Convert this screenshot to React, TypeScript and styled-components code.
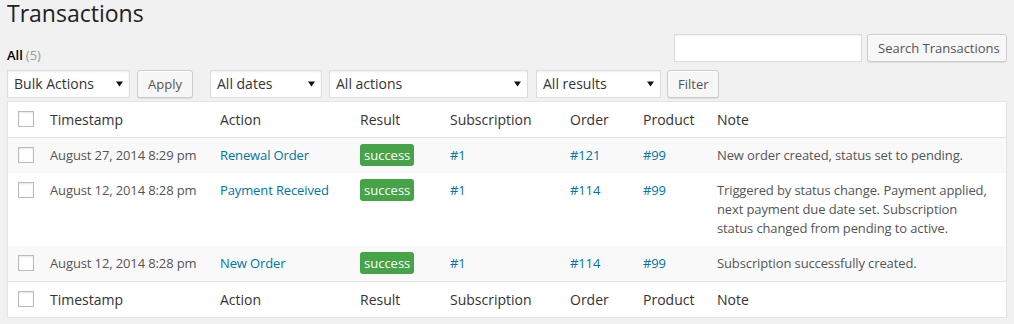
import React from "react";
import styled, { createGlobalStyle } from "styled-components";

const Global = createGlobalStyle`
  html, body { margin: 0; padding: 0; }
  body {
    background: #f1f1f1;
    font-family: "Open Sans", "Liberation Sans", sans-serif;
    font-size: 13px;
    color: #444;
  }
  * { box-sizing: border-box; }
`;

const Page = styled.div`
  padding: 0 7px;
`;

const Title = styled.h1`
  margin: 0;
  font-size: 23px;
  font-weight: 400;
  line-height: 27px;
  color: #222;
  height: 34px;
`;

const TopRow = styled.div`
  display: flex;
  justify-content: space-between;
  align-items: flex-start;
  height: 28px;
`;

const Views = styled.div`
  margin-top: 12px;
  font-size: 13px;
  line-height: 18px;
  color: #999;
`;

const Current = styled.a`
  color: #000;
  font-weight: 600;
  text-decoration: none;
  margin-right: 3px;
`;

const SearchBox = styled.form`
  display: flex;
  gap: 5px;
  margin: 0;
`;

const SearchInput = styled.input`
  width: 188px;
  height: 28px;
  border: 1px solid #ddd;
  background: #fff;
  box-shadow: inset 0 1px 2px rgba(0, 0, 0, 0.07);
  font: inherit;
  padding: 3px 5px;
  margin: 0;
  outline: none;
`;

const Button = styled.button<{ $w?: number }>`
  height: 28px;
  ${(p) => (p.$w ? `width: ${p.$w}px;` : "")}
  padding: 0 10px 1px;
  border: 1px solid #ccc;
  border-radius: 3px;
  background: #f7f7f7;
  box-shadow: inset 0 1px 0 #fff, 0 1px 0 rgba(0, 0, 0, 0.08);
  color: #555;
  font-family: "Open Sans", "Liberation Sans", sans-serif;
  font-size: 13px;
  line-height: 26px;
  white-space: nowrap;
  margin: 0;
  cursor: pointer;
`;

const Toolbar = styled.div`
  display: flex;
  align-items: center;
  margin-top: 8px;
  height: 28px;
`;

const Select = styled.div<{ $w: number; $ml?: number }>`
  display: flex;
  align-items: center;
  justify-content: space-between;
  width: ${(p) => p.$w}px;
  margin-left: ${(p) => p.$ml ?? 0}px;
  height: 28px;
  padding: 0 6px 0 6px;
  border: 1px solid #ddd;
  background: #fff;
  box-shadow: inset 0 1px 2px rgba(0, 0, 0, 0.07);
  font-size: 14px;
  color: #333;
  line-height: 26px;
`;

const Spacer = styled.span<{ $w: number }>`
  display: block;
  width: ${(p) => p.$w}px;
  flex: none;
`;

const Arrow = () => (
  <svg width="7" height="6" viewBox="0 0 7 6" style={{ flex: "none" }}>
    <path d="M0 0.5 H7 L3.5 5.5 Z" fill="#111" />
  </svg>
);

const Table = styled.table`
  margin-top: 3px;
  width: 100%;
  table-layout: fixed;
  border-collapse: separate;
  border-spacing: 0;
  border: 1px solid #e5e5e5;
  background: #fff;
  box-shadow: 0 1px 1px rgba(0, 0, 0, 0.04);
`;

const Th = styled.th<{ $foot?: boolean }>`
  text-align: left;
  font-weight: 400;
  font-size: 14px;
  line-height: 19px;
  color: #333;
  padding: 8px 10px;
  ${(p) =>
    p.$foot
      ? "border-top: 1px solid #e1e1e1;"
      : "border-bottom: 1px solid #e1e1e1;"}
`;

const CheckTh = styled(Th)`
  padding: 9px 0 0 10px;
  vertical-align: top;
`;

const Row = styled.tr<{ $alt?: boolean }>`
  background: ${(p) => (p.$alt ? "#f9f9f9" : "#fff")};
`;

const Td = styled.td`
  font-size: 13px;
  line-height: 19px;
  letter-spacing: -0.12px;
  color: #555;
  padding: 8px 10px;
  vertical-align: top;
`;

const CheckTd = styled(Td)`
  padding: 9px 0 0 10px;
`;

const Check = styled.input.attrs({ type: "checkbox" })`
  appearance: none;
  display: block;
  width: 16px;
  height: 16px;
  margin: 0;
  border: 1px solid #bbb;
  background: #fff;
  box-shadow: inset 0 1px 2px rgba(0, 0, 0, 0.1);
`;

const Link = styled.a`
  color: #0074a2;
  text-decoration: none;
`;

const Badge = styled.span`
  background: #46a348;
  color: #fff;
  border-radius: 3px;
  padding: 2px 4px;
  letter-spacing: 0;
`;

const widths = [32, 170, 140, 90, 120, 73, 74, 299];
const heads = ["Timestamp", "Action", "Result", "Subscription", "Order", "Product", "Note"];

const rows = [
  {
    ts: "August 27, 2014 8:29 pm",
    action: "Renewal Order",
    sub: "#1",
    order: "#121",
    product: "#99",
    note: "New order created, status set to pending.",
  },
  {
    ts: "August 12, 2014 8:28 pm",
    action: "Payment Received",
    sub: "#1",
    order: "#114",
    product: "#99",
    note: "Triggered by status change. Payment applied, next payment due date set. Subscription status changed from pending to active.",
  },
  {
    ts: "August 12, 2014 8:28 pm",
    action: "New Order",
    sub: "#1",
    order: "#114",
    product: "#99",
    note: "Subscription successfully created.",
  },
];

const HeadRow = ({ foot }: { foot?: boolean }) => (
  <tr>
    <CheckTh $foot={foot}>
      <Check />
    </CheckTh>
    {heads.map((h) => (
      <Th key={h} $foot={foot}>
        {h}
      </Th>
    ))}
  </tr>
);

export default function App() {
  return (
    <>
      <Global />
      <Page>
        <Title>Transactions</Title>
        <TopRow>
          <Views>
            <Current href="#">All</Current>(5)
          </Views>
          <SearchBox onSubmit={(e) => e.preventDefault()}>
            <SearchInput type="search" />
            <Button $w={140} type="submit">Search Transactions</Button>
          </SearchBox>
        </TopRow>
        <Toolbar>
          <Select $w={123}>
            <span>Bulk Actions</span>
            <Arrow />
          </Select>
          <Spacer $w={7} />
          <Button $w={56}>Apply</Button>
          <Select $w={112} $ml={17}>
            <span>All dates</span>
            <Arrow />
          </Select>
          <Select $w={199} $ml={7}>
            <span>All actions</span>
            <Arrow />
          </Select>
          <Select $w={125} $ml={8}>
            <span>All results</span>
            <Arrow />
          </Select>
          <Spacer $w={6} />
          <Button $w={52}>Filter</Button>
        </Toolbar>
        <Table>
          <colgroup>
            {widths.map((w, i) => (
              <col key={i} style={{ width: w }} />
            ))}
          </colgroup>
          <thead>
            <HeadRow />
          </thead>
          <tbody>
            {rows.map((r, i) => (
              <Row key={i} $alt={i % 2 === 0}>
                <CheckTd>
                  <Check />
                </CheckTd>
                <Td>{r.ts}</Td>
                <Td>
                  <Link href="#">{r.action}</Link>
                </Td>
                <Td>
                  <Badge>success</Badge>
                </Td>
                <Td>
                  <Link href="#">{r.sub}</Link>
                </Td>
                <Td>
                  <Link href="#">{r.order}</Link>
                </Td>
                <Td>
                  <Link href="#">{r.product}</Link>
                </Td>
                <Td>{r.note}</Td>
              </Row>
            ))}
          </tbody>
          <tfoot>
            <HeadRow foot />
          </tfoot>
        </Table>
      </Page>
    </>
  );
}
